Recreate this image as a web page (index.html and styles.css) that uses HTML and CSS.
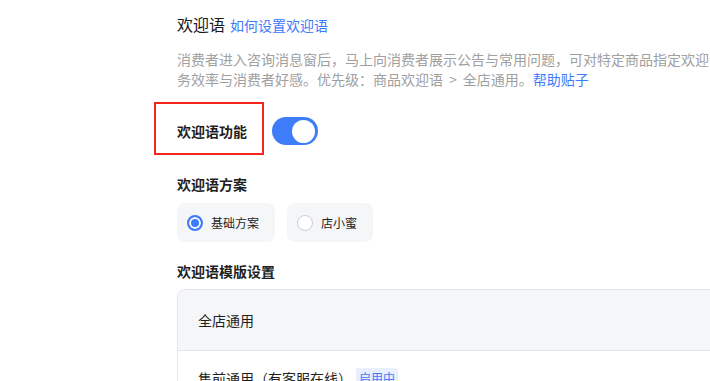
FILE: index.html
```html
<!DOCTYPE html>
<html lang="zh-CN">

<head>
    <meta charset="UTF-8">
    <meta name="viewport" content="width=device-width, initial-scale=1.0">
    <title>欢迎语设置</title>
    <link rel="stylesheet" href="styles.css">
</head>

<body>
    <div class="page">
        <div class="title-row">
            <span class="title">欢迎语</span>
            <a class="link" href="#">如何设置欢迎语</a>
        </div>
        <p class="desc">消费者进入咨询消息窗后，马上向消费者展示公告与常用问题，可对特定商品指定欢迎语，提升服务效率与消费者好感。优先级：商品欢迎语<span class="gt">&gt;</span>全店通用。<a class="link" href="#">帮助贴子</a></p>

        <div class="switch-row">
            <span class="label">欢迎语功能</span>
            <span class="mark-box"></span>
            <span class="switch on"><span class="knob"></span></span>
        </div>

        <div class="label section">欢迎语方案</div>
        <div class="radio-group">
            <label class="radio-card">
                <span class="radio checked"></span>
                <span>基础方案</span>
            </label>
            <label class="radio-card">
                <span class="radio"></span>
                <span>店小蜜</span>
            </label>
        </div>

        <div class="label section-tpl">欢迎语模版设置</div>
        <div class="tpl-table">
            <div class="tpl-head">全店通用</div>
            <div class="tpl-row">
                <span>售前通用（有客服在线）</span>
                <span class="tag">启用中</span>
            </div>
        </div>
    </div>
</body>

</html>
```

FILE: styles.css
```css
body {
    margin: 0;
    padding: 0;
    background: #ffffff;
    font-family: "Noto Sans CJK SC", "Noto Sans", sans-serif;
    color: #1f1f1f;
    overflow: hidden;
}

.page {
    margin-left: 177px;
    padding-top: 12px;
    width: 606px;
}

.title-row {
    display: flex;
    align-items: baseline;
    gap: 5px;
    line-height: 24px;
}

.title {
    font-size: 16px;
    color: #1a1a1a;
}

.link {
    color: #3d7bfa;
    font-size: 14px;
    text-decoration: none;
}

.desc {
    margin: 12px 0 0;
    font-size: 14px;
    line-height: 20px;
    color: #a0a0a0;
}

.gt {
    margin: 0 6px;
}

.switch-row {
    position: relative;
    display: flex;
    align-items: center;
    gap: 25px;
    height: 28px;
    margin-top: 28px;
}

.label {
    font-size: 14px;
    font-weight: bold;
    color: #1f1f1f;
    line-height: 22px;
}

.mark-box {
    position: absolute;
    left: -23px;
    top: -15px;
    width: 106px;
    height: 49px;
    border: 2px solid #f5241c;
}

.switch {
    display: inline-flex;
    align-items: center;
    width: 46px;
    height: 28px;
    border-radius: 14px;
    background: #3e7cfa;
    padding: 0 3px;
    box-sizing: border-box;
}

.switch.on {
    justify-content: flex-end;
}

.knob {
    width: 23px;
    height: 23px;
    border-radius: 50%;
    background: #ffffff;
}

.section {
    margin-top: 28px;
}

.radio-group {
    display: flex;
    gap: 12px;
    margin-top: 8px;
}

.radio-card {
    display: flex;
    align-items: center;
    gap: 8px;
    height: 39px;
    padding: 0 16px 0 10px;
    border-radius: 8px;
    background: #f5f6f8;
    font-size: 12px;
    color: #1f1f1f;
}

.radio {
    width: 16px;
    height: 16px;
    border-radius: 50%;
    border: 1px solid #c9cdd4;
    background: #ffffff;
    box-sizing: border-box;
}

.radio.checked {
    border: 2px solid #3e7cfa;
    background: #3e7cfa;
    box-shadow: inset 0 0 0 2px #ffffff;
}

.section-tpl {
    margin-top: 18px;
}

.tpl-table {
    margin-top: 7px;
    width: 600px;
    border: 1px solid #e5e6eb;
    border-radius: 8px 0 0 0;
    overflow: hidden;
}

.tpl-head {
    height: 60px;
    padding-left: 20px;
    display: flex;
    align-items: center;
    background: #f5f6f8;
    border-bottom: 1px solid #e5e6eb;
    font-size: 14px;
}

.tpl-row {
    height: 61px;
    padding: 17px 0 0 20px;
    box-sizing: border-box;
    display: flex;
    align-items: flex-start;
    gap: 4px;
    font-size: 14px;
    line-height: 20px;
}

.tag {
    font-size: 12px;
    line-height: 20px;
    padding: 0 3px;
    color: #3d7bfa;
    background: #e8f0ff;
    border-radius: 2px;
}
```
